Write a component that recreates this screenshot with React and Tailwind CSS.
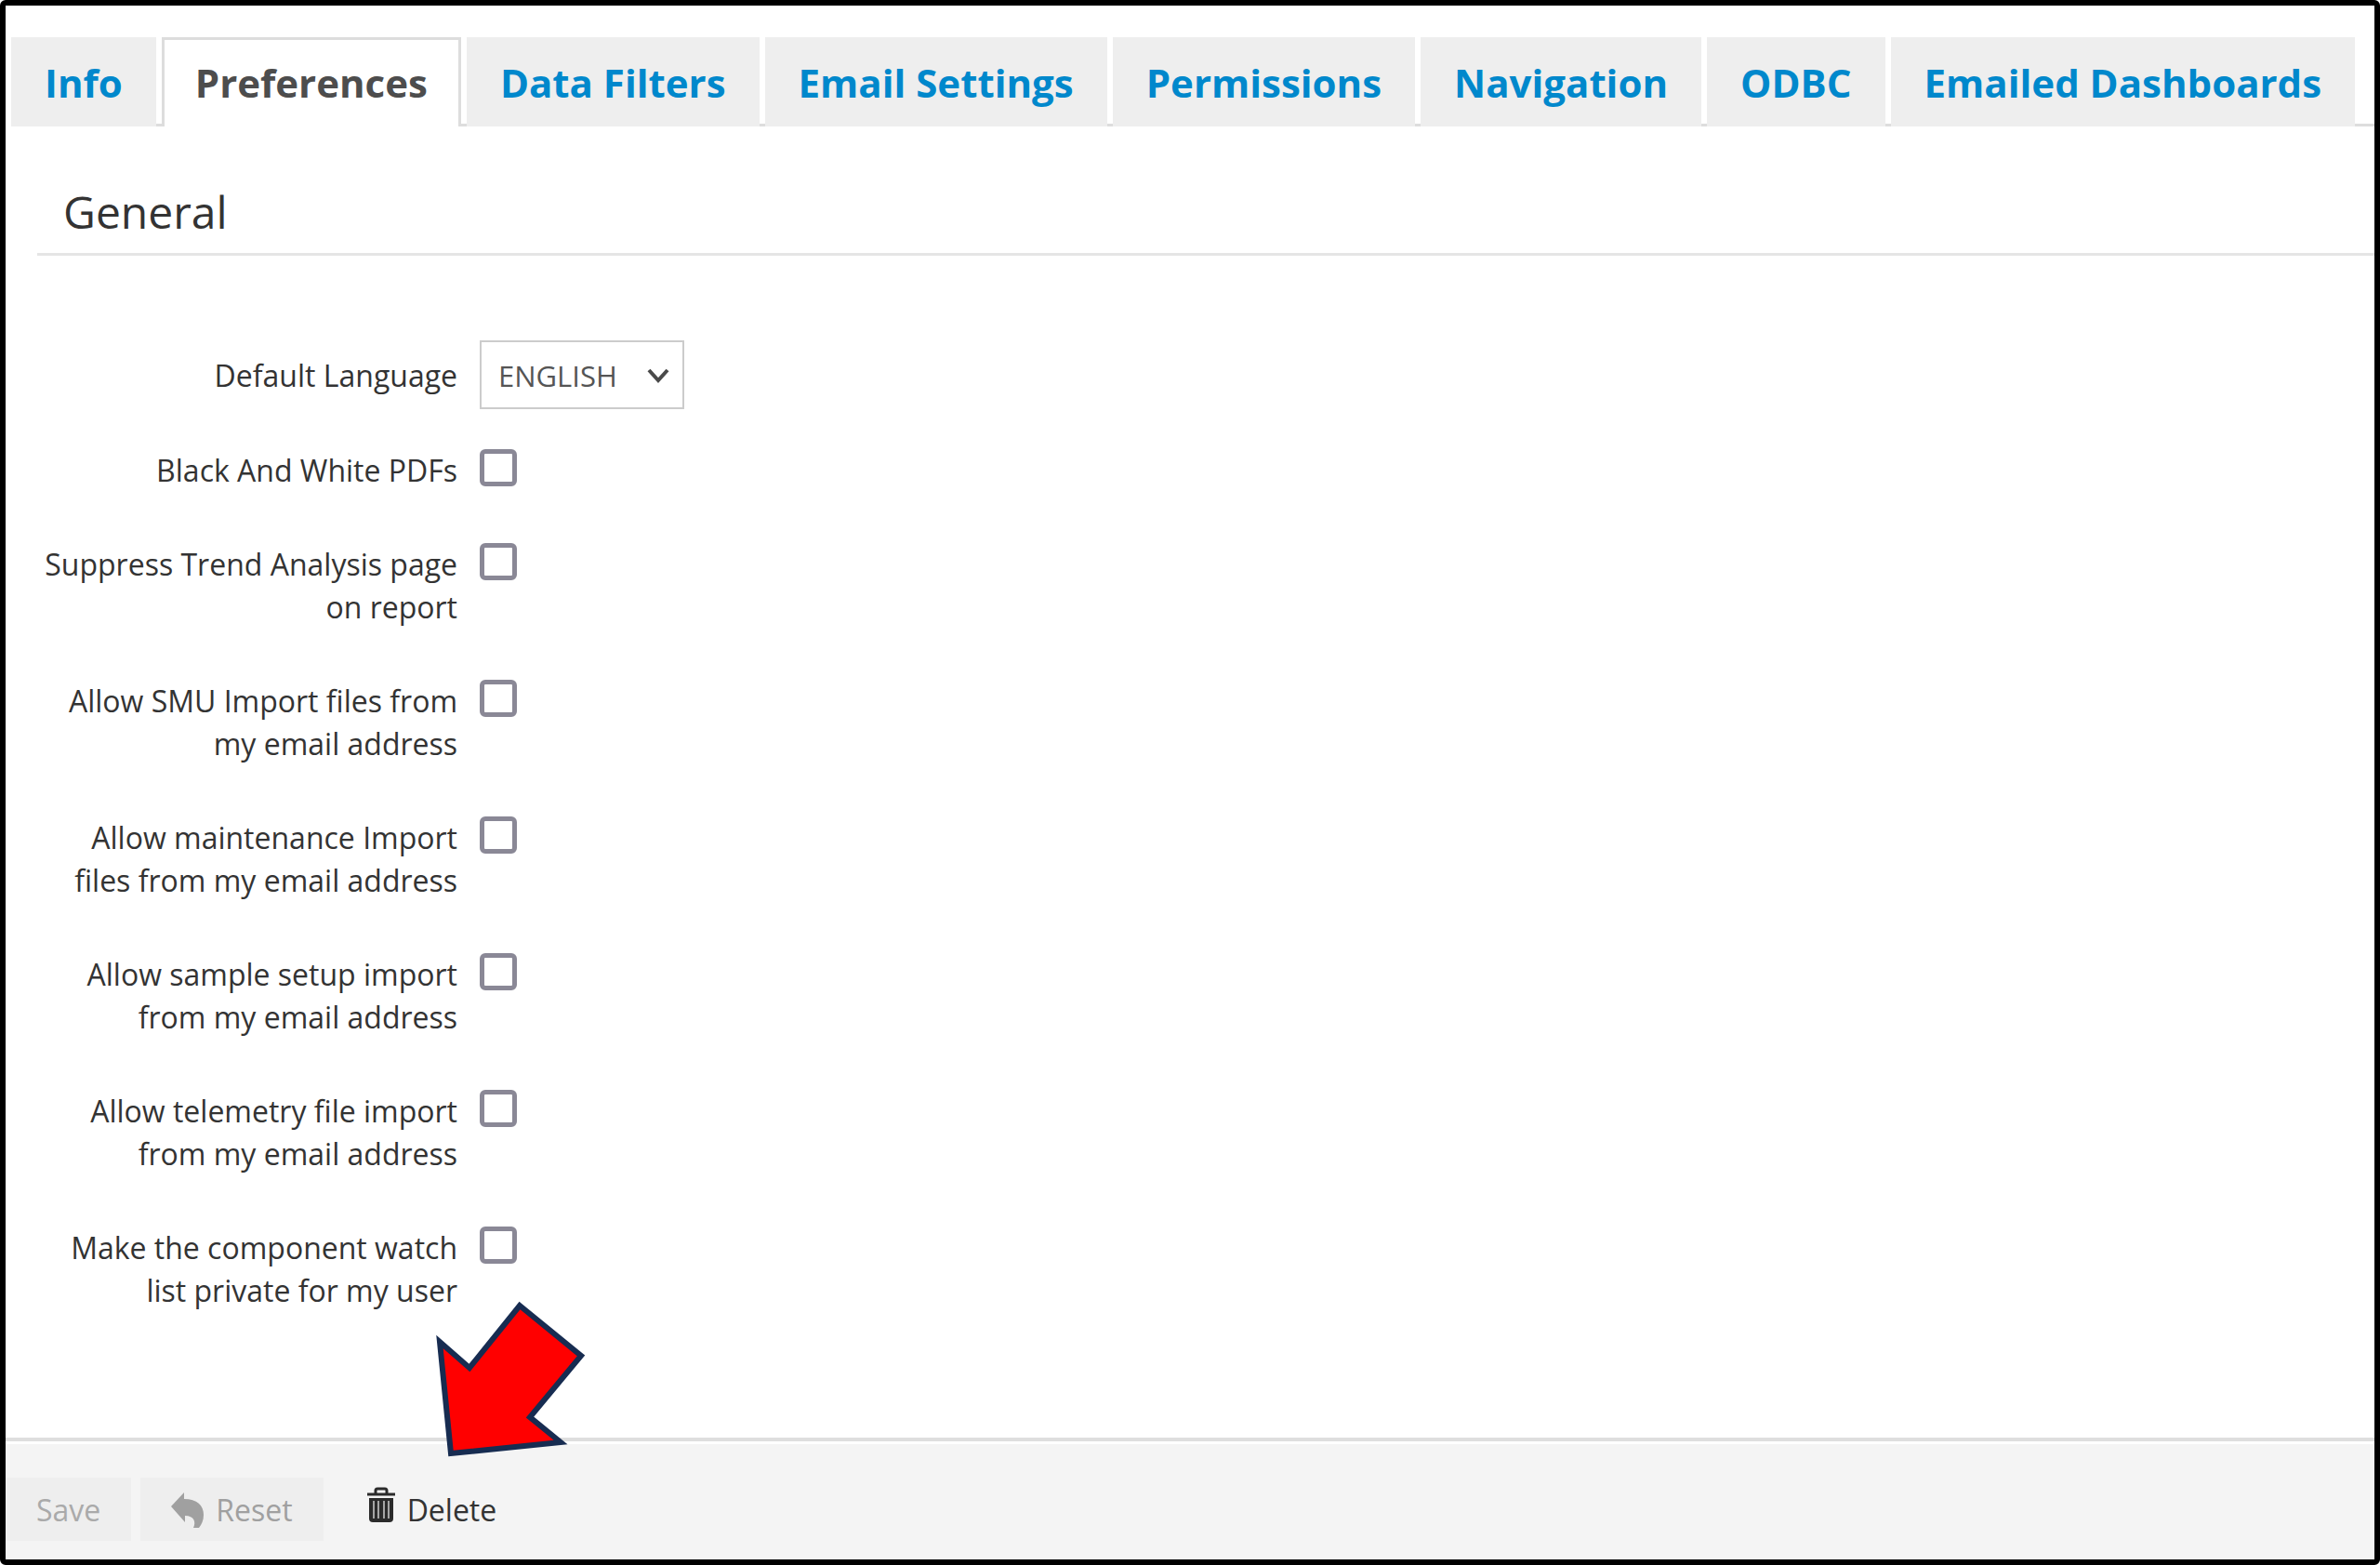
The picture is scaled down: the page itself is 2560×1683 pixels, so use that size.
import { useState } from "react";

const tabs = [
  "Info",
  "Preferences",
  "Data Filters",
  "Email Settings",
  "Permissions",
  "Navigation",
  "ODBC",
  "Emailed Dashboards",
];

const options = [
  { id: "bwPdfs", label: "Black And White PDFs" },
  { id: "suppressTrend", label: "Suppress Trend Analysis page on report" },
  { id: "smuImport", label: "Allow SMU Import files from my email address" },
  { id: "maintenanceImport", label: "Allow maintenance Import files from my email address" },
  { id: "sampleImport", label: "Allow sample setup import from my email address" },
  { id: "telemetryImport", label: "Allow telemetry file import from my email address" },
  { id: "privateWatchList", label: "Make the component watch list private for my user" },
];

const ResetIcon = () => (
  <svg viewBox="0 0 36 38" className="w-9 h-[38px]" fill="currentColor" aria-hidden="true">
    <path d="M0 15 14 0v7c14 0 21 7 21 17 0 6-2 10-5 14h-6c3-6 1-13-9-13v7Z" />
  </svg>
);

const TrashIcon = () => (
  <svg viewBox="0 0 32 38" className="w-8 h-[38px] mb-3" fill="none" aria-hidden="true">
    <path d="M1 8h30M10 8V4q0-2 2-2h8q2 0 2 2v4" stroke="#2b2b2b" strokeWidth="3" />
    <path d="M3 12h26v22q0 4-4 4H7q-4 0-4-4Z" fill="#2b2b2b" />
    <path d="M8 15v19M13 15v19M19 15v19M24 15v19" stroke="#a5a5a5" strokeWidth="2" />
  </svg>
);

const App = () => {
  const [activeTab, setActiveTab] = useState("Preferences");
  const [language, setLanguage] = useState("ENGLISH");
  const [values, setValues] = useState({});

  const toggle = (id) => setValues({ ...values, [id]: !values[id] });

  return (
    <div className="min-h-screen flex flex-col bg-white border-6 border-black rounded-md font-['Open_Sans',sans-serif] text-[#333333]">
      <nav className="mt-[34px] ml-[6px] flex items-end gap-[6px] border-b-3 border-[#dddddd]">
        {tabs.map((tab) => (
          <button
            key={tab}
            type="button"
            onClick={() => setActiveTab(tab)}
            className={
              tab === activeTab
                ? "h-24 -mb-[3px] px-[33px] pb-[3px] border-3 border-b-0 border-[#dddddd] bg-white text-[42px] font-bold text-[#4d4d4d] whitespace-nowrap"
                : "h-24 -mb-[3px] px-9 bg-[#eeeeee] text-[42px] font-bold text-[#0088cc] whitespace-nowrap"
            }
          >
            {tab}
          </button>
        ))}
      </nav>

      <main className="flex-1 pl-[34px]">
        <h2 className="pt-[59px] pb-[11px] pl-7 text-[48px] leading-[66px] border-b-3 border-[#e5e5e5]">
          General
        </h2>

        <form className="pt-[91px] flex flex-col gap-[55px] text-[32px] leading-[46px]">
          <div className="flex items-center gap-6 h-[74px] -mb-3">
            <label htmlFor="language" className="w-[452px] pt-[2px] text-right">
              Default Language
            </label>
            <div className="relative">
              <select
                id="language"
                value={language}
                onChange={(e) => setLanguage(e.target.value)}
                className="appearance-none w-[220px] h-[74px] pl-[18px] pt-[2px] border-2 border-[#cccccc] bg-white text-[31px] text-[#555555]"
              >
                <option>ENGLISH</option>
              </select>
              <svg
                viewBox="0 0 24 16"
                className="absolute right-4 top-[30px] w-6 h-4 pointer-events-none"
                fill="none"
                stroke="#4a4a4a"
                strokeWidth="4"
                aria-hidden="true"
              >
                <path d="M2 2l10 11L22 2" />
              </svg>
            </div>
          </div>

          {options.map(({ id, label }) => (
            <div key={id} className="flex items-start gap-6">
              <label htmlFor={id} className="w-[452px] pl-2 text-right">
                {label}
              </label>
              <input
                id={id}
                type="checkbox"
                checked={!!values[id]}
                onChange={() => toggle(id)}
                className="appearance-none size-10 border-5 border-[#8a8896] rounded-md bg-white checked:bg-[#0088cc]"
              />
            </div>
          ))}
        </form>
      </main>

      <footer className="relative border-t-4 border-[#dedede] text-[32px]">
        <div className="border-t-3 border-white bg-[#f4f4f4] pt-9 pb-5 flex gap-[10px]">
          <button type="button" disabled className="h-[68px] px-[33px] pt-[2px] bg-[#eeeeee] text-[#aaaaaa]">
            Save
          </button>
          <button
            type="button"
            disabled
            className="h-[68px] px-[33px] pt-[2px] flex items-center gap-3 bg-[#eeeeee] text-[#a0a0a0]"
          >
            <ResetIcon />
            Reset
          </button>
          <button type="button" className="h-[68px] px-9 pt-[2px] flex items-center gap-3">
            <TrashIcon />
            Delete
          </button>
        </div>
        <svg
          viewBox="0 0 170 180"
          className="absolute left-[459px] bottom-[104px] w-[170px] h-[180px] pointer-events-none"
          aria-hidden="true"
        >
          <path
            d="M94 11 160 65 105 131 138 158 20 170 8 50 40 78Z"
            fill="#ff0000"
            stroke="#172c51"
            strokeWidth="6"
          />
        </svg>
      </footer>
    </div>
  );
};

export default App;
